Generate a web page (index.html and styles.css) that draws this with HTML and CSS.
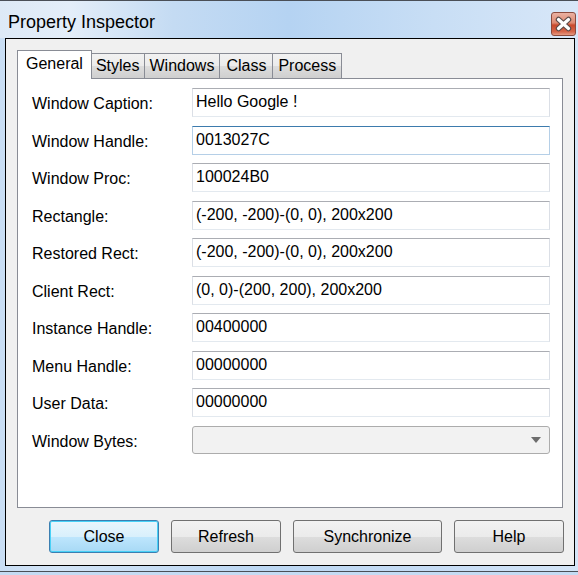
FILE: index.html
```html
<!DOCTYPE html>
<html>
<head>
    <title>Property Inspector</title>
    <link rel="stylesheet" href="styles.css">
</head>
<body>
<div class="window">
    <div class="titlebar">
        <span class="title">Property Inspector</span>
        <a href="#" class="close-x">
            <svg width="25" height="24" viewBox="0 0 25 24">
                <path d="M7.5 7.5 L17.5 16.5 M17.5 7.5 L7.5 16.5" stroke="#5a4a48" stroke-width="5.5" stroke-linecap="round"/>
                <path d="M7.5 7.5 L17.5 16.5 M17.5 7.5 L7.5 16.5" stroke="#ffffff" stroke-width="3.2" stroke-linecap="round"/>
            </svg>
        </a>
    </div>
    <div class="client">
        <div class="tabs">
            <a href="#" class="tab active">General</a>
            <a href="#" class="tab tab-styles">Styles</a>
            <a href="#" class="tab">Windows</a>
            <a href="#" class="tab tab-class">Class</a>
            <a href="#" class="tab">Process</a>
        </div>
        <div class="panel">
            <div class="row">
                <label>Window Caption:</label>
                <div class="field">Hello Google !</div>
            </div>
            <div class="row">
                <label>Window Handle:</label>
                <div class="field focused">0013027C</div>
            </div>
            <div class="row">
                <label>Window Proc:</label>
                <div class="field">100024B0</div>
            </div>
            <div class="row">
                <label>Rectangle:</label>
                <div class="field">(-200, -200)-(0, 0), 200x200</div>
            </div>
            <div class="row">
                <label>Restored Rect:</label>
                <div class="field">(-200, -200)-(0, 0), 200x200</div>
            </div>
            <div class="row">
                <label>Client Rect:</label>
                <div class="field">(0, 0)-(200, 200), 200x200</div>
            </div>
            <div class="row">
                <label>Instance Handle:</label>
                <div class="field">00400000</div>
            </div>
            <div class="row">
                <label>Menu Handle:</label>
                <div class="field">00000000</div>
            </div>
            <div class="row">
                <label>User Data:</label>
                <div class="field">00000000</div>
            </div>
            <div class="row">
                <label>Window Bytes:</label>
                <div class="combo"><span class="arrow"></span></div>
            </div>
        </div>
        <div class="buttons">
            <a href="#" class="button default">Close</a>
            <a href="#" class="button">Refresh</a>
            <a href="#" class="button wide">Synchronize</a>
            <a href="#" class="button">Help</a>
        </div>
    </div>
</div>
</body>
</html>
```
FILE: styles.css
```css
/* Aero style dialog frame */
body {
    margin: 0;
    background-color: #c4dbf3;
    font-family: "Liberation Sans", Arial, sans-serif;
    font-size: 16px;
    color: #000000;
}

.window {
    width: 578px;
    height: 572px;
    box-sizing: border-box;
    border-top: 1px solid #4a4f57;
    border-bottom: 1px solid #4a4f57;
    padding: 0 3px 5px 5px;
    display: flex;
    flex-direction: column;
    background: linear-gradient(to right, #c9def4 0%, #d3e4f6 10%, #bcd7f2 45%, #c6dcf4 75%, #d4e5f7 100%);
}

.titlebar {
    height: 37px;
    display: flex;
    justify-content: space-between;
    align-items: flex-start;
    margin-left: -5px;
    margin-right: -3px;
    background: linear-gradient(to right, #dde9f6 0%, #e4eef9 12%, #c4dbf3 30%, #b5d3f2 50%, #c8def5 75%, #d8e7f8 100%);
}

.title {
    margin: 11px 0 0 8px;
    font-size: 18px;
    color: #000000;
}

.close-x {
    display: block;
    width: 25px;
    height: 24px;
    margin: 11px 2px 0 0;
    box-sizing: border-box;
    border: 1px solid #8b4b3e;
    border-radius: 3px;
    background: linear-gradient(to bottom, #eab1a2 0%, #de8a72 45%, #c9492c 55%, #d6684c 85%, #e59a83 100%);
}

.close-x svg {
    display: block;
    margin: -1px 0 0 -1px;
}

.client {
    flex: 1;
    display: flex;
    flex-direction: column;
    border: 1px solid #000000;
    background-color: #f0f0f0;
    padding: 11px 11px 12px 11px;
}

/* Tab strip */
.tabs {
    display: flex;
    align-items: flex-end;
    height: 28px;
    position: relative;
    z-index: 1;
}

.tab {
    height: 25px;
    box-sizing: border-box;
    padding: 3px 5px 0 5px;
    margin-right: -1px;
    border: 1px solid #898c95;
    border-bottom: none;
    background: linear-gradient(to bottom, #f2f2f2 0%, #ebebeb 50%, #dddddd 51%, #cfcfcf 100%);
    color: #000000;
    text-decoration: none;
    line-height: 18px;
}

.tab-styles {
    padding: 3px 4px 0 4px;
}

.tab-class {
    padding: 3px 6px 0 6px;
}

.tab.active {
    height: 29px;
    margin-bottom: -1px;
    padding: 4px 8px 0 8px;
    background: #ffffff;
}

.panel {
    height: 430px;
    box-sizing: border-box;
    border: 1px solid #898c95;
    background-color: #ffffff;
    padding: 9px 12px 0 14px;
    display: flex;
    flex-direction: column;
    gap: 8.5px;
}

.row {
    display: flex;
    align-items: flex-start;
    height: 29px;
}

.row label {
    width: 160px;
    flex-shrink: 0;
    padding-top: 7px;
    line-height: 18px;
}

.field {
    flex: 1;
    height: 29px;
    box-sizing: border-box;
    border: 1px solid #e3e9ef;
    border-top-color: #abadb3;
    border-left-color: #dbdfe6;
    border-right-color: #dbdfe6;
    padding: 4px 4px 0 3px;
    line-height: 18px;
    background-color: #ffffff;
}

.field.focused {
    border-color: #b5cfe7;
    border-top-color: #3d7bad;
}

.combo {
    flex: 1;
    height: 28px;
    box-sizing: border-box;
    border: 1px solid #acacac;
    border-radius: 3px;
    background-color: #f2f2f2;
    display: flex;
    justify-content: flex-end;
    align-items: center;
    padding-right: 8px;
}

.arrow {
    width: 0;
    height: 0;
    border-left: 5px solid transparent;
    border-right: 5px solid transparent;
    border-top: 6px solid #6d6d6d;
}

/* Dialog buttons */
.buttons {
    display: flex;
    justify-content: flex-end;
    gap: 12px;
    margin-top: 12px;
    margin-right: -1px;
}

.button {
    width: 110px;
    height: 33px;
    box-sizing: border-box;
    border: 1px solid #707070;
    border-radius: 3px;
    background: linear-gradient(to bottom, #f2f2f2 0%, #ebebeb 50%, #dddddd 51%, #cfcfcf 100%);
    color: #000000;
    text-decoration: none;
    text-align: center;
    line-height: 31px;
}

.button.wide {
    width: 149px;
}

.button.default {
    border-color: #3c7fb1;
    box-shadow: inset 0 0 0 1px #48d1f7;
    background: linear-gradient(to bottom, #eaf6fd 0%, #d9f0fc 50%, #bee6fd 51%, #a7d9f5 100%);
}
```
